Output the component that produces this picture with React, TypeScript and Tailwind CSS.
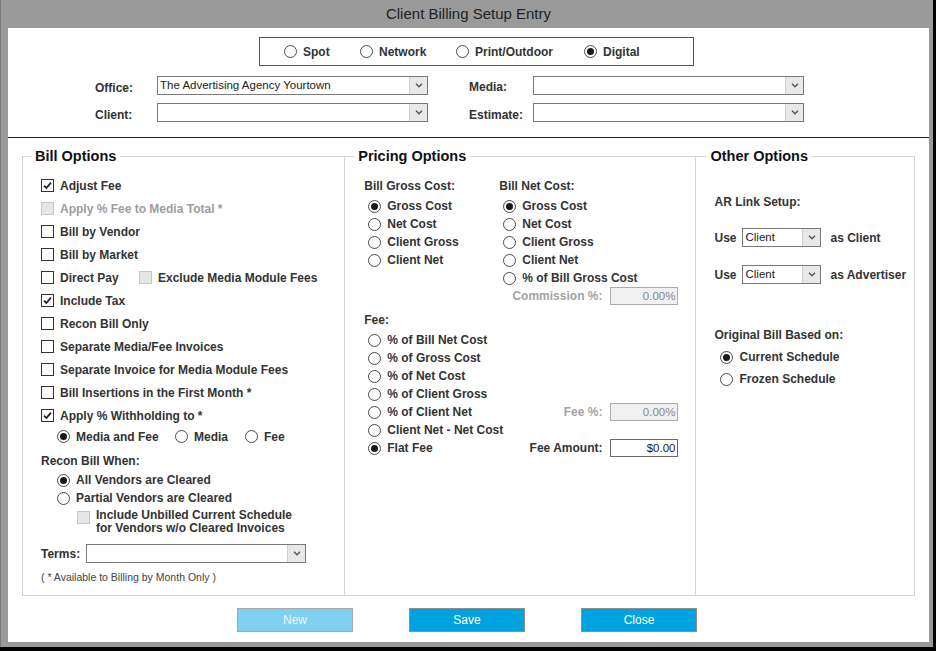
import React from 'react';

// Small Windows-forms style primitives
function CheckBox({ checked = false, disabled = false }: { checked?: boolean; disabled?: boolean }) {
  return (
    <span
      className={`inline-flex w-[13px] h-[13px] shrink-0 items-center justify-center border ${
        disabled ? 'border-[#c6c6c6] bg-[#e6e6e6]' : 'border-[#333] bg-white'
      }`}
    >
      {checked && (
        <svg width="11" height="11" viewBox="0 0 11 11">
          <path d="M2 5.6 L4.4 8 L9 2.6" fill="none" stroke="#1e1e1e" strokeWidth="1.7" />
        </svg>
      )}
    </span>
  );
}

function Radio({ checked = false }: { checked?: boolean }) {
  return (
    <span className="inline-flex w-[13px] h-[13px] shrink-0 items-center justify-center rounded-full border border-[#4a4a4a] bg-white">
      {checked && <span className="w-[7px] h-[7px] rounded-full bg-[#1a1a1a]" />}
    </span>
  );
}

function Combo({ className, value = '' }: { className: string; value?: string }) {
  return (
    <div className={`flex border border-[#7a7a7a] bg-white ${className}`}>
      <div className="flex-1 pl-[2px] text-[11.5px] font-normal leading-[16px] text-[#222] truncate">{value}</div>
      <div className="w-[18px] border-l border-[#cfcfcf] bg-[#e8e8e8] flex items-center justify-center">
        <svg width="8" height="5" viewBox="0 0 8 5">
          <path d="M1 0.8 L4 3.8 L7 0.8" fill="none" stroke="#555" strokeWidth="1.4" />
        </svg>
      </div>
    </div>
  );
}

function Amount({ value, disabled = false }: { value: string; disabled?: boolean }) {
  return (
    <div
      className={`w-[68px] h-[18px] border text-right pr-[2px] text-[11.5px] font-normal leading-[16px] ${
        disabled ? 'border-[#acacac] bg-[#f0f0f0] text-[#8a8a8a]' : 'border-[#6a6a6a] bg-white text-[#222]'
      }`}
    >
      {value}
    </div>
  );
}

function CheckRow({ label, checked, disabled }: { label: string; checked?: boolean; disabled?: boolean }) {
  return (
    <div className="flex items-center h-[23px] gap-[6px]">
      <CheckBox checked={checked} disabled={disabled} />
      <span className={disabled ? 'text-[#9d9d9d]' : ''}>{label}</span>
    </div>
  );
}

function RadioRow({ label, checked, h = 'h-[18px]' }: { label: string; checked?: boolean; h?: string }) {
  return (
    <div className={`flex items-center gap-[6px] ${h}`}>
      <Radio checked={checked} />
      <span>{label}</span>
    </div>
  );
}

export default function App() {
  return (
    <div className="w-[936px] h-[651px] bg-black font-['Liberation_Sans',Arial,sans-serif] text-[#333]">
      <div className="w-[933px] h-[647px] bg-[#9a9a9a] border-l border-[#7a7a7a] flex flex-col pl-[7px] pr-[4px] pb-[5px]">
        {/* Title bar */}
        <div className="h-[28px] flex items-center justify-center text-[15px] text-[#222]">
          Client Billing Setup Entry
        </div>

        <div className="flex-1 bg-white flex flex-col text-[12px] font-bold">
          {/* Header fields */}
          <div className="h-[109px] pt-[9px]">
            <div className="ml-[251px] w-[435px] h-[29px] border border-[#555] flex items-center pl-[24px]">
              <div className="w-[76px] flex items-center gap-[6px]">
                <Radio />
                <span>Spot</span>
              </div>
              <div className="w-[96px] flex items-center gap-[6px]">
                <Radio />
                <span>Network</span>
              </div>
              <div className="w-[128px] flex items-center gap-[6px]">
                <Radio />
                <span>Print/Outdoor</span>
              </div>
              <div className="flex items-center gap-[6px]">
                <Radio checked />
                <span>Digital</span>
              </div>
            </div>

            <div className="mt-[10px] flex items-center h-[19px] pl-[87px]">
              <span className="w-[62px] pt-[4px]">Office:</span>
              <Combo className="w-[271px] h-[19px]" value="The Advertising Agency Yourtown" />
              <span className="ml-[41px] w-[64px] pt-[3px]">Media:</span>
              <Combo className="w-[271px] h-[19px]" />
            </div>
            <div className="mt-[8px] flex items-center h-[19px] pl-[87px]">
              <span className="w-[62px] pt-[4px]">Client:</span>
              <Combo className="w-[271px] h-[19px]" />
              <span className="ml-[41px] w-[64px] pt-[4px]">Estimate:</span>
              <Combo className="w-[271px] h-[19px]" />
            </div>
          </div>
          <div className="h-[1px] bg-[#222]" />

          {/* Option groups */}
          <div className="flex-1 flex flex-col px-[14px] pt-[10px]">
            <div className="flex">
              <fieldset className="w-[324px] h-[448px] border border-[#d5d5d5] pl-[18px] pt-[9px]">
                <legend className="-ml-[10px] px-[4px] text-[14.5px] font-bold leading-[17px] text-[#111]">
                  Bill Options
                </legend>
                <CheckRow label="Adjust Fee" checked />
                <CheckRow label="Apply % Fee to Media Total *" disabled />
                <CheckRow label="Bill by Vendor" />
                <CheckRow label="Bill by Market" />
                <div className="flex items-center h-[23px]">
                  <div className="w-[98px] flex items-center gap-[6px]">
                    <CheckBox />
                    <span>Direct Pay</span>
                  </div>
                  <div className="flex items-center gap-[6px]">
                    <CheckBox disabled />
                    <span>Exclude Media Module Fees</span>
                  </div>
                </div>
                <CheckRow label="Include Tax" checked />
                <CheckRow label="Recon Bill Only" />
                <CheckRow label="Separate Media/Fee Invoices" />
                <CheckRow label="Separate Invoice for Media Module Fees" />
                <CheckRow label="Bill Insertions in the First Month *" />
                <CheckRow label="Apply % Withholding to *" checked />
                <div className="flex items-center h-[19px] pl-[16px]">
                  <div className="w-[118px] flex items-center gap-[6px]">
                    <Radio checked />
                    <span>Media and Fee</span>
                  </div>
                  <div className="w-[70px] flex items-center gap-[6px]">
                    <Radio />
                    <span>Media</span>
                  </div>
                  <div className="flex items-center gap-[6px]">
                    <Radio />
                    <span>Fee</span>
                  </div>
                </div>
                <div className="mt-[4px] h-[21px] flex items-center">Recon Bill When:</div>
                <div className="pl-[16px]">
                  <RadioRow label="All Vendors are Cleared" checked />
                  <RadioRow label="Partial Vendors are Cleared" />
                </div>
                <div className="mt-[2px] pl-[36px] flex items-start gap-[6px]">
                  <span className="mt-[2px]">
                    <CheckBox disabled />
                  </span>
                  <div className="leading-[13px]">
                    Include Unbilled Current Schedule
                    <br />
                    for Vendors w/o Cleared Invoices
                  </div>
                </div>
                <div className="mt-[9px] flex items-center h-[19px]">
                  <span className="w-[45px]">Terms:</span>
                  <Combo className="w-[220px] h-[19px]" />
                </div>
                <div className="mt-[8px] leading-[13px] text-[10.5px] font-normal text-[#444]">
                  ( * Available to Billing by Month Only )
                </div>
              </fieldset>

              <fieldset className="w-[352px] h-[448px] border border-l-0 border-[#d5d5d5] pl-[19px] pt-[9px]">
                <legend className="-ml-[10px] px-[4px] text-[14.5px] font-bold leading-[17px] text-[#111]">
                  Pricing Options
                </legend>
                <div className="flex">
                  <div className="w-[135px]">
                    <div className="h-[23px] flex items-center">Bill Gross Cost:</div>
                    <div className="pl-[4px]">
                      <RadioRow label="Gross Cost" checked />
                      <RadioRow label="Net Cost" />
                      <RadioRow label="Client Gross" />
                      <RadioRow label="Client Net" />
                    </div>
                  </div>
                  <div>
                    <div className="h-[23px] flex items-center">Bill Net Cost:</div>
                    <div className="pl-[4px]">
                      <RadioRow label="Gross Cost" checked />
                      <RadioRow label="Net Cost" />
                      <RadioRow label="Client Gross" />
                      <RadioRow label="Client Net" />
                      <RadioRow label="% of Bill Gross Cost" />
                    </div>
                  </div>
                </div>
                <div className="h-[18px] flex items-center justify-end pr-[17px]">
                  <span className="mr-[8px] text-[#a3a3a3]">Commission %:</span>
                  <Amount value="0.00%" disabled />
                </div>
                <div className="mt-[3px] h-[23px] flex items-center">Fee:</div>
                <div className="pl-[4px] pr-[17px]">
                  <RadioRow label="% of Bill Net Cost" />
                  <RadioRow label="% of Gross Cost" />
                  <RadioRow label="% of Net Cost" />
                  <RadioRow label="% of Client Gross" />
                  <div className="flex items-center justify-between h-[18px]">
                    <RadioRow label="% of Client Net" />
                    <div className="flex items-center">
                      <span className="mr-[8px] text-[#a3a3a3]">Fee %:</span>
                      <Amount value="0.00%" disabled />
                    </div>
                  </div>
                  <RadioRow label="Client Net - Net Cost" />
                  <div className="flex items-center justify-between h-[18px]">
                    <RadioRow label="Flat Fee" checked />
                    <div className="flex items-center">
                      <span className="mr-[8px]">Fee Amount:</span>
                      <Amount value="$0.00" />
                    </div>
                  </div>
                </div>
              </fieldset>

              <fieldset className="w-[219px] h-[448px] border border-l-0 border-[#d5d5d5] pl-[18px] pt-[25px]">
                <legend className="-ml-[8px] px-[4px] text-[14.5px] font-bold leading-[17px] text-[#111]">
                  Other Options
                </legend>
                <div className="h-[23px] flex items-center">AR Link Setup:</div>
                <div className="mt-[13px] h-[23px] flex items-center">
                  <span className="w-[28px]">Use</span>
                  <Combo className="w-[79px] h-[19px]" value="Client" />
                  <span className="ml-[9px]">as Client</span>
                </div>
                <div className="mt-[14px] h-[23px] flex items-center">
                  <span className="w-[28px]">Use</span>
                  <Combo className="w-[79px] h-[19px]" value="Client" />
                  <span className="ml-[9px]">as Advertiser</span>
                </div>
                <div className="mt-[37px] h-[23px] flex items-center">Original Bill Based on:</div>
                <div className="pl-[6px]">
                  <RadioRow label="Current Schedule" checked h="h-[22px]" />
                  <RadioRow label="Frozen Schedule" h="h-[22px]" />
                </div>
              </fieldset>
            </div>

            {/* Buttons */}
            <div className="mt-[12px] flex gap-[56px] pl-[215px] text-[12px] font-normal">
              <button className="w-[116px] h-[24px] border border-[#a9a9a9] bg-[#80d1ef] text-[#eef8fc]">New</button>
              <button className="w-[116px] h-[24px] border border-[#8e8e8e] bg-[#00a3df] text-white">Save</button>
              <button className="w-[116px] h-[24px] border border-[#8e8e8e] bg-[#00a3df] text-white">Close</button>
            </div>
          </div>
        </div>
      </div>
    </div>
  );
}
